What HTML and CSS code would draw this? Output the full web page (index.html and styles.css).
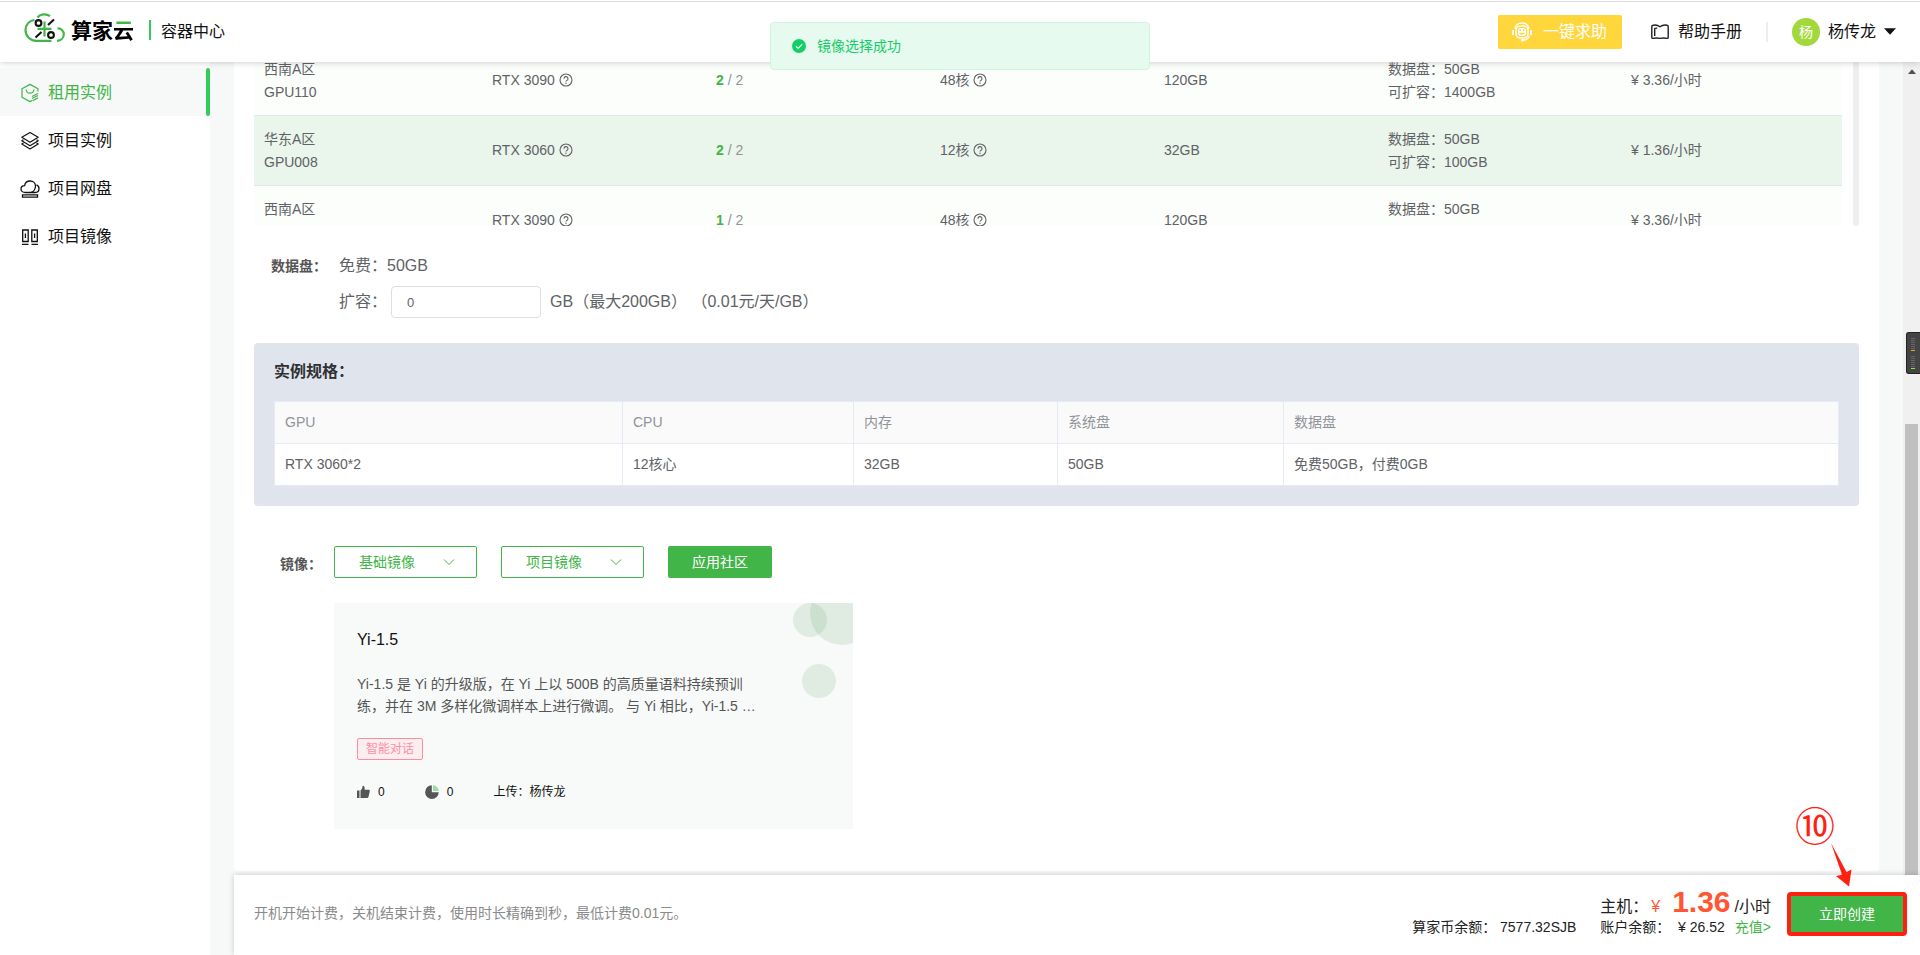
FILE: index.html
```html
<!DOCTYPE html>
<html lang="zh-CN">
<head>
<meta charset="utf-8">
<title>容器中心</title>
<link rel="stylesheet" href="styles.css">
</head>
<body>
<svg class="defs" width="0" height="0" aria-hidden="true">
  <symbol id="i-help" viewBox="0 0 14 14">
    <circle cx="7" cy="7" r="6" fill="none" stroke="currentColor" stroke-width="1.1"/>
    <path d="M5 5.700a2 2 0 1 1 2.900 1.700c-.6.3-.9.6-.9 1.200" fill="none" stroke="currentColor" stroke-width="1.1"/>
    <circle cx="7" cy="10.200" r=".7" fill="currentColor"/>
  </symbol>
</svg>

<header class="header">
  <div class="brand">
    <svg class="brand-mark" width="42" height="30" viewBox="0 0 42 30" fill="none">
      <g stroke="#42b549" stroke-width="2.200">
        <path d="M10.500 7C5.500 7.500 1.500 11.500 1.500 17c0 6.200 5 10.800 10.500 10.800h15.500"/>
        <path d="M13.500 4.500C16 .9 22 .2 26 3.200"/>
        <path d="M33.500 15.500c3.500-.3 6.300 2.500 6.300 5.800 0 3.500-2.800 6.300-6.800 6.500"/>
        <path d="M20.500 8.500v15M13.500 15.800h14"/>
      </g>
      <g stroke="#111" stroke-width="2.100">
        <circle cx="14.500" cy="10" r="2.900"/>
        <circle cx="27" cy="22" r="2.900"/>
        <path d="M30 6.500L24 12M17.500 19L11.500 24.500"/>
      </g>
    </svg>
    <span class="brand-name">算家<span class="brand-cloud">云</span></span>
    <span class="brand-sep"></span>
    <span>容器中心</span>
  </div>
  <div class="header-right">
    <button class="help-btn" type="button">
      <svg width="20" height="20" viewBox="0 0 20 20" fill="none" stroke="#fff">
        <path d="M3.200 7C3.500 3 6.500 1 10 1s6.500 2 6.800 6" stroke-width="1.400"/>
        <rect x="4" y="4" width="12" height="12" rx="4.500" stroke-width="1.400"/>
        <path d="M1 8v5M19 8v5" stroke-width="2"/>
        <rect x="6" y="6" width="8" height="8" rx="2.500" fill="#fff" stroke="none"/>
        <path d="M8.200 7v2M11.800 7v2" stroke="#ffd63c" stroke-width="1.400"/>
        <path d="M7.200 10.800h5.600c-.4 2.600-5.200 2.600-5.600 0z" fill="#ffd63c" stroke="none"/>
        <path d="M17.500 13.500c-1 3-3.500 4.500-6.500 4.700" stroke-width="1.200"/>
        <circle cx="10.500" cy="18.200" r="1.500" fill="#fff" stroke="none"/>
      </svg>
      一键求助
    </button>
    <a class="manual" href="#">
      <svg width="18" height="16" viewBox="0 0 18 16" fill="none" stroke="#222" stroke-width="1.400" stroke-linejoin="round">
        <path d="M9 2.800C7 1.200 4 .8 2.200 1.200 1.300 1.300.8 1.700.8 2.400v11c0 .7.500 1.100 1.200 1 2.200-.5 5-.4 7 0 2-.4 4.800-.5 7 0 .7.100 1.200-.3 1.200-1v-11c0-.7-.5-1.100-1.200-1.200C14 .8 11 1.200 9 2.800zM3.700 12V4.500c.8-.5 1.600-.5 2.500-.3"/>
      </svg>
      帮助手册
    </a>
    <span class="header-sep"></span>
    <button class="user" type="button">
      <span class="avatar">杨</span>
      <span>杨传龙</span>
      <svg width="12" height="7" viewBox="0 0 12 7"><path d="M0 .3h12L6 6.800z" fill="#111"/></svg>
    </button>
  </div>
</header>

<div class="layout">
  <nav class="sidebar">
    <a class="nav-item active" href="#">
      <svg width="20" height="20" viewBox="0 0 20 20" fill="none" stroke="currentColor" stroke-width="1.200" stroke-linejoin="round">
        <path d="M18 8.500V5.700L10 1.400 2 5.700v8.600l8 4.300 2.500-1.300"/>
        <path d="M6 6.500c.5 2.500 2 3.700 4 3.700s3.500-1.200 4-3.700M12 13.500l6-3M12 15.500l6-3M13 17.500l5-2.600"/>
      </svg>
      租用实例
    </a>
    <a class="nav-item" href="#">
      <svg width="20" height="20" viewBox="0 0 20 20" fill="none" stroke="currentColor" stroke-width="1.200" stroke-linejoin="round">
        <path d="M10 1.500l8.200 4.800L10 11.200 1.800 6.300z"/>
        <path d="M3.500 8.700L1.800 9.700l8.200 5 8.200-5-1.700-1M3.500 12l-1.700 1 8.200 5 8.200-5-1.700-1"/>
      </svg>
      项目实例
    </a>
    <a class="nav-item" href="#">
      <svg width="20" height="20" viewBox="0 0 20 20" fill="none" stroke="currentColor" stroke-width="1.300">
        <path d="M5.500 13.500C2.800 13.500 1 12 1 10c0-1.800 1.500-3.200 3.600-3.300C5 4 7.200 2 10.200 2c3 0 5.300 2.200 5.300 5 0 3-1.800 6-5 6.500M16.500 5.800c1.700.7 2.500 2 2.500 3.700 0 2.400-1.700 4-4 4H5"/>
        <path d="M2.500 15.800h15v2.400h-15z"/>
      </svg>
      项目网盘
    </a>
    <a class="nav-item" href="#">
      <svg width="20" height="20" viewBox="0 0 20 20" fill="none" stroke="currentColor" stroke-width="1.300">
        <path d="M2.700 3h5.500v11.500H2.700zM11.800 3h5.500v11.500h-5.500zM5.400 6.500v4.500M14.600 6.500v4.500M2 17.300h6.500M11.500 17.300H18"/>
      </svg>
      项目镜像
    </a>
  </nav>

  <div class="main">
    <div class="scroll-area">
      <main class="sheet">
        <div class="servers">
          <table class="server-table">
            <colgroup><col class="c1"><col class="c2"><col class="c2"><col class="c2"><col class="c2"><col class="c3"><col></colgroup>
            <tbody>
              <tr>
                <td class="two">西南A区<br>GPU110</td>
                <td>RTX 3090 <svg class="q"><use href="#i-help"/></svg></td>
                <td><span class="count"><b>2</b> / 2</span></td>
                <td>48核 <svg class="q"><use href="#i-help"/></svg></td>
                <td>120GB</td>
                <td class="two">数据盘：50GB<br>可扩容：1400GB</td>
                <td>¥ 3.36/小时</td>
              </tr>
              <tr class="selected">
                <td class="two">华东A区<br>GPU008</td>
                <td>RTX 3060 <svg class="q"><use href="#i-help"/></svg></td>
                <td><span class="count"><b>2</b> / 2</span></td>
                <td>12核 <svg class="q"><use href="#i-help"/></svg></td>
                <td>32GB</td>
                <td class="two">数据盘：50GB<br>可扩容：100GB</td>
                <td>¥ 1.36/小时</td>
              </tr>
              <tr>
                <td class="two">西南A区<br>&nbsp;</td>
                <td>RTX 3090 <svg class="q"><use href="#i-help"/></svg></td>
                <td><span class="count"><b>1</b> / 2</span></td>
                <td>48核 <svg class="q"><use href="#i-help"/></svg></td>
                <td>120GB</td>
                <td class="two">数据盘：50GB<br>&nbsp;</td>
                <td>¥ 3.36/小时</td>
              </tr>
            </tbody>
          </table>
          <div class="servers-bar"></div>
        </div>

        <section class="disk">
          <span class="label">数据盘：</span>
          <div class="disk-rows">
            <div class="disk-row">免费：50GB</div>
            <div class="disk-row">
              <label for="expand">扩容：</label>
              <input id="expand" class="disk-input" type="text" value="0">
              <span>GB（最大200GB） （0.01元/天/GB）</span>
            </div>
          </div>
        </section>

        <section class="spec">
          <h2 class="spec-title">实例规格：</h2>
          <table class="spec-table">
            <colgroup><col class="s1"><col class="s2"><col class="s3"><col class="s4"><col></colgroup>
            <thead><tr><th>GPU</th><th>CPU</th><th>内存</th><th>系统盘</th><th>数据盘</th></tr></thead>
            <tbody><tr><td>RTX 3060*2</td><td>12核心</td><td>32GB</td><td>50GB</td><td>免费50GB，付费0GB</td></tr></tbody>
          </table>
        </section>

        <section class="image">
          <span class="label">镜像：</span>
          <div>
            <div class="image-actions">
              <button class="btn-outline" type="button" aria-haspopup="true">基础镜像
                <svg width="12" height="8" viewBox="0 0 12 8"><path d="M1 1.500l5 5 5-5" fill="none" stroke="currentColor"/></svg>
              </button>
              <button class="btn-outline" type="button" aria-haspopup="true">项目镜像
                <svg width="12" height="8" viewBox="0 0 12 8"><path d="M1 1.500l5 5 5-5" fill="none" stroke="currentColor"/></svg>
              </button>
              <button class="btn-solid" type="button">应用社区</button>
            </div>
            <article class="app">
              <svg class="app-deco" width="64" height="100" viewBox="0 0 64 100" fill="#3c8f45" fill-opacity=".12">
                <circle cx="21" cy="17" r="17"/><circle cx="53" cy="10" r="32"/><circle cx="30" cy="78" r="17"/>
              </svg>
              <h3 class="app-title">Yi-1.5</h3>
              <p class="app-desc">Yi-1.5 是 Yi 的升级版，在 Yi 上以 500B 的高质量语料持续预训<br>练，并在 3M 多样化微调样本上进行微调。 与 Yi 相比，Yi-1.5 …</p>
              <span class="tag">智能对话</span>
              <div class="app-meta">
                <span class="stat">
                  <svg width="13" height="14" viewBox="0 0 13 14" fill="#555"><path d="M0 5.500h2.500V13H0zM3.500 5.500C5 4.500 5.500 3 5.600.8 7.500.8 8 2.500 7.600 4.700h4c.9 0 1.400.7 1.200 1.500l-1.300 5.600c-.2.800-.8 1.200-1.500 1.200H3.500z"/></svg>
                  0
                </span>
                <span class="stat">
                  <svg width="14" height="14" viewBox="0 0 14 14"><path d="M6.800.3A6.800 6.800 0 1 0 13.700 7.200H6.800z" fill="#555"/><path d="M8 .2V6h5.800A6.200 6.200 0 0 0 8 .2z" fill="#9bdba4"/></svg>
                  0
                </span>
                <span>上传：杨传龙</span>
              </div>
            </article>
          </div>
        </section>
      </main>
      <div class="scrollbar">
        <svg width="8" height="5" viewBox="0 0 8 5"><path d="M4 .2L8 5H0z" fill="#505050"/></svg>
        <div class="scroll-thumb"></div>
      </div>
    </div>

    <footer class="footer">
      <span class="footer-note">开机开始计费，关机结束计费，使用时长精确到秒，最低计费0.01元。</span>
      <div class="cost">
        <div class="cost-main">主机：<span class="yen">¥</span><strong class="price">1.36</strong>/小时</div>
        <div class="cost-balance">
          <span>算家币余额： 7577.32SJB</span>
          <span>账户余额：&nbsp; ¥ 26.52</span>
          <a href="#">充值&gt;</a>
        </div>
      </div>
      <div class="create-wrap">
        <button class="create" type="button">立即创建</button>
        <div class="callout">
          <span class="callout-num">⑩</span>
          <svg class="callout-arrow" width="24" height="44" viewBox="0 0 24 44"><path d="M1 0l15.500 29 5-2.500-2.500 17L6 33l6-1.200z" fill="#ff2012"/></svg>
        </div>
      </div>
    </footer>
  </div>
</div>

<div class="toast" role="status">
  <svg width="14" height="14" viewBox="0 0 14 14"><circle cx="7" cy="7" r="7" fill="#13ce66"/><path d="M3.900 7.200l2.300 2.200 4-4.200" fill="none" stroke="#e7faf0" stroke-width="1.200"/></svg>
  镜像选择成功
</div>

<div class="meter">
  <svg width="4" height="32" viewBox="0 0 4 32" shape-rendering="crispEdges">
    <path d="M0 .5h4M0 2.500h4M0 4.500h4M0 6.500h4M0 8.500h4M0 10.500h4M0 18.500h4M0 20.500h4M0 22.500h4M0 24.500h4M0 26.500h4M0 28.500h4" stroke="#666"/>
    <path d="M0 12.500h4" stroke="#ff9d1c"/><path d="M0 30.500h4" stroke="#84f01c"/>
  </svg>
</div>
</body>
</html>
```
FILE: styles.css
```css
* { box-sizing: border-box; }

body {
  margin: 0;
  height: 100vh;
  display: flex;
  flex-direction: column;
  overflow: hidden;
  background: #fff;
  color: #111;
  font: 14px/20px "Liberation Sans", "Noto Sans CJK SC", sans-serif;
}

button, input { font: inherit; color: inherit; }
button { border: 0; padding: 0; background: none; cursor: pointer; }
a { color: inherit; text-decoration: none; }
h2, h3, p { margin: 0; }
svg { flex: none; }
.defs { position: absolute; }

/* Header */
.header {
  position: relative;
  z-index: 2;
  flex: none;
  height: 62px;
  display: flex;
  justify-content: space-between;
  align-items: center;
  padding: 0 24px;
  border-top: 1px solid #fff;
  background: #fff;
  box-shadow: inset 0 1px #dcdfdf, 0 1px 6px rgba(0, 0, 0, .18);
  font-size: 16px;
}
.brand { display: flex; align-items: center; }
.brand-mark { margin: 0 5px 8px 0; }
.brand-name { margin-bottom: 2px; font-size: 21px; font-weight: 700; line-height: 30px; color: #000; }
.brand-cloud {
  display: inline-block;
  background: linear-gradient(#42b549 12px, #000 12px);
  background-clip: text;
  -webkit-background-clip: text;
  color: transparent;
}
.brand-sep { width: 2px; height: 20px; margin: 0 10px 4px 15px; background: #33cb61; }
.header-right { display: flex; align-items: center; }
.help-btn {
  display: flex;
  align-items: center;
  gap: 11px;
  height: 34px;
  padding: 0 15px 0 14px;
  border-radius: 2px;
  background: #ffd63c;
  color: #fff;
}
.manual { display: flex; align-items: center; gap: 9px; margin-left: 29px; }
.header-sep { width: 2px; height: 20px; margin: 0 24px; background: #eee; }
.user { display: flex; align-items: center; gap: 8px; }
.avatar {
  width: 28px;
  border-radius: 50%;
  background: #a3d83c;
  color: #fff;
  font-size: 14px;
  line-height: 28px;
  text-align: center;
}

/* Sidebar */
.layout { flex: 1; min-height: 0; display: flex; }
.sidebar { flex: none; width: 210px; padding-top: 6px; }
.nav-item {
  display: flex;
  align-items: center;
  gap: 8px;
  height: 48px;
  padding: 2px 0 0 20px;
  font-size: 16px;
  color: #111;
}
.nav-item.active {
  position: relative;
  background: #f7f9f8;
  color: #42b549;
}
.nav-item.active::after {
  content: "";
  position: absolute;
  inset: 0 0 0 auto;
  width: 4px;
  border-radius: 2px;
  background: #33cb61;
}

/* Main column */
.main {
  flex: 1;
  min-width: 0;
  display: flex;
  flex-direction: column;
  padding-left: 24px;
  background: #f7f9f8;
}
.scroll-area { flex: 1; min-height: 0; display: flex; gap: 24px; }
.sheet {
  flex: 1;
  min-width: 0;
  margin-bottom: 4px;
  padding: 0 20px;
  overflow: hidden;
  border-radius: 0 0 4px 4px;
  background: #fff;
}
.scrollbar {
  display: flex;
  flex-direction: column;
  align-items: center;
  width: 17px;
  padding: 7px 2px 0;
  background: #f0f0f0;
}
.scroll-thumb { width: 13px; flex: 1; margin-top: 350px; background: #c0c0c0; }

.servers { display: flex; gap: 11px; height: 164px; overflow: hidden; }
.server-table {
  flex: 1;
  height: 210px;
  margin-top: -16px;
  border-spacing: 0;
  table-layout: fixed;
  color: #606266;
  line-height: 23px;
}
.c1 { width: 228px; }
.c2 { width: 224px; }
.c3 { width: 243px; }
.server-table td {
  height: 70px;
  padding: 0 10px;
  border-bottom: 1px solid #dfe6ec;
  background: #fcfefb;
}
.server-table .two { padding-top: 1px; }
.server-table .selected td { background: #eaf5eb; }
.q { width: 14px; height: 14px; vertical-align: -2px; }
.count { color: #909399; }
.count b { color: #42b549; }
.servers-bar { width: 6px; border-radius: 0 0 3px 3px; background: #eee; }

.label { flex: none; font-weight: 700; color: #555; }
.disk { display: flex; margin: 28px 0 25px; padding-left: 17px; color: #606266; }
.disk .label { width: 68px; line-height: 24px; }
.disk-rows { display: flex; flex-direction: column; gap: 8px; font-size: 16px; line-height: 24px; }
.disk-row { display: flex; align-items: center; }
.disk-input {
  width: 150px;
  height: 32px;
  margin: 0 9px 0 4px;
  padding: 0 15px;
  border: 1px solid #dcdfe6;
  border-radius: 4px;
  background: #fff;
  font-size: 13px;
}

.spec { padding: 17px 20px 20px; border-radius: 4px; background: #dfe4ed; }
.spec-title { margin-bottom: 17px; font-size: 16px; line-height: 24px; color: #303133; }
.spec-table { width: 100%; border-collapse: collapse; table-layout: fixed; background: #fff; color: #606266; }
.spec-table th, .spec-table td {
  height: 42px;
  padding: 0 10px 2px;
  border: 1px solid #e6eaf5;
  text-align: left;
}
.spec-table th { background: #fafafa; color: #909399; font-weight: 400; }
.s1 { width: 348px; }
.s2 { width: 231px; }
.s3 { width: 204px; }
.s4 { width: 226px; }

.image { display: flex; margin-top: 40px; padding-left: 26px; }
.image .label { width: 54px; line-height: 36px; }
.image-actions { display: flex; gap: 24px; margin-bottom: 25px; }
.btn-outline {
  display: flex;
  align-items: center;
  justify-content: space-between;
  width: 143px;
  height: 32px;
  padding: 0 21px 0 24px;
  border: 1px solid #42b549;
  border-radius: 2px;
  color: #42b549;
}
.btn-solid { width: 104px; height: 32px; border-radius: 2px; background: #42b549; color: #fff; }

.app {
  position: relative;
  width: 519px;
  padding: 25px 23px 24px;
  background: #f8faf9;
}
.app-deco { position: absolute; top: 0; right: 0; }
.app-title { margin-bottom: 21px; font-size: 16px; font-weight: 400; line-height: 24px; }
.app-desc { margin-bottom: 21px; line-height: 22px; color: #555; }
.tag {
  display: inline-block;
  margin-bottom: 22px;
  padding: 0 8px;
  border: 1px solid #ff8da0;
  border-radius: 2px;
  background: #fbeef0;
  color: #ff8da0;
  font-size: 12px;
}
.app-meta { display: flex; margin-bottom: 3px; font-size: 12px; }
.stat { display: flex; align-items: center; gap: 8px; margin-right: 40px; }

/* Footer */
.footer {
  position: relative;
  flex: none;
  display: flex;
  align-items: center;
  height: 80px;
  padding: 0 13px 2px 20px;
  background: #fff;
  box-shadow: 0 0 6px rgba(0, 0, 0, .2);
}
.footer-note { flex: 1; padding-bottom: 2px; color: #8a8a8a; }
.cost {
  display: flex;
  flex-direction: column;
  align-items: flex-end;
  margin-right: 16px;
  color: #222;
}
.cost-main { font-size: 16px; line-height: 20px; }
.yen { margin: 0 12px 0 3px; color: #ff5733; }
.price { margin-right: 4px; color: #ff5733; font-size: 30px; }
.cost-balance { display: flex; gap: 10px; }
.cost-balance span:first-child { margin-right: 14px; }
.cost-balance a { color: #42b549; }
.create-wrap { position: relative; }
.create {
  width: 120px;
  height: 44px;
  border: 4px solid #ff2012;
  border-radius: 4px;
  background: #42b549;
  color: #fff;
}

/* Numbered marker floating above the create button */
.callout { position: absolute; left: 8px; top: -88px; color: #ff2012; }
.callout-num { display: block; font: 40px/40px "Noto Sans CJK SC", sans-serif; }
.callout-arrow { position: absolute; left: 35px; top: 39px; }

.toast {
  position: absolute;
  z-index: 3;
  left: 50%;
  top: 22px;
  width: 380px;
  height: 48px;
  margin-left: -190px;
  display: flex;
  align-items: center;
  gap: 11px;
  padding-left: 21px;
  border: 1px solid #cdf5df;
  border-radius: 4px;
  background: #e7faf0;
  color: #13ce66;
}

.meter {
  position: absolute;
  right: 0;
  top: 332px;
  width: 14px;
  height: 42px;
  padding: 5px 0 0 4px;
  border: 1px solid #222;
  border-right: 0;
  border-radius: 3px 0 0 3px;
  background: #444;
  line-height: 0;
}
```
